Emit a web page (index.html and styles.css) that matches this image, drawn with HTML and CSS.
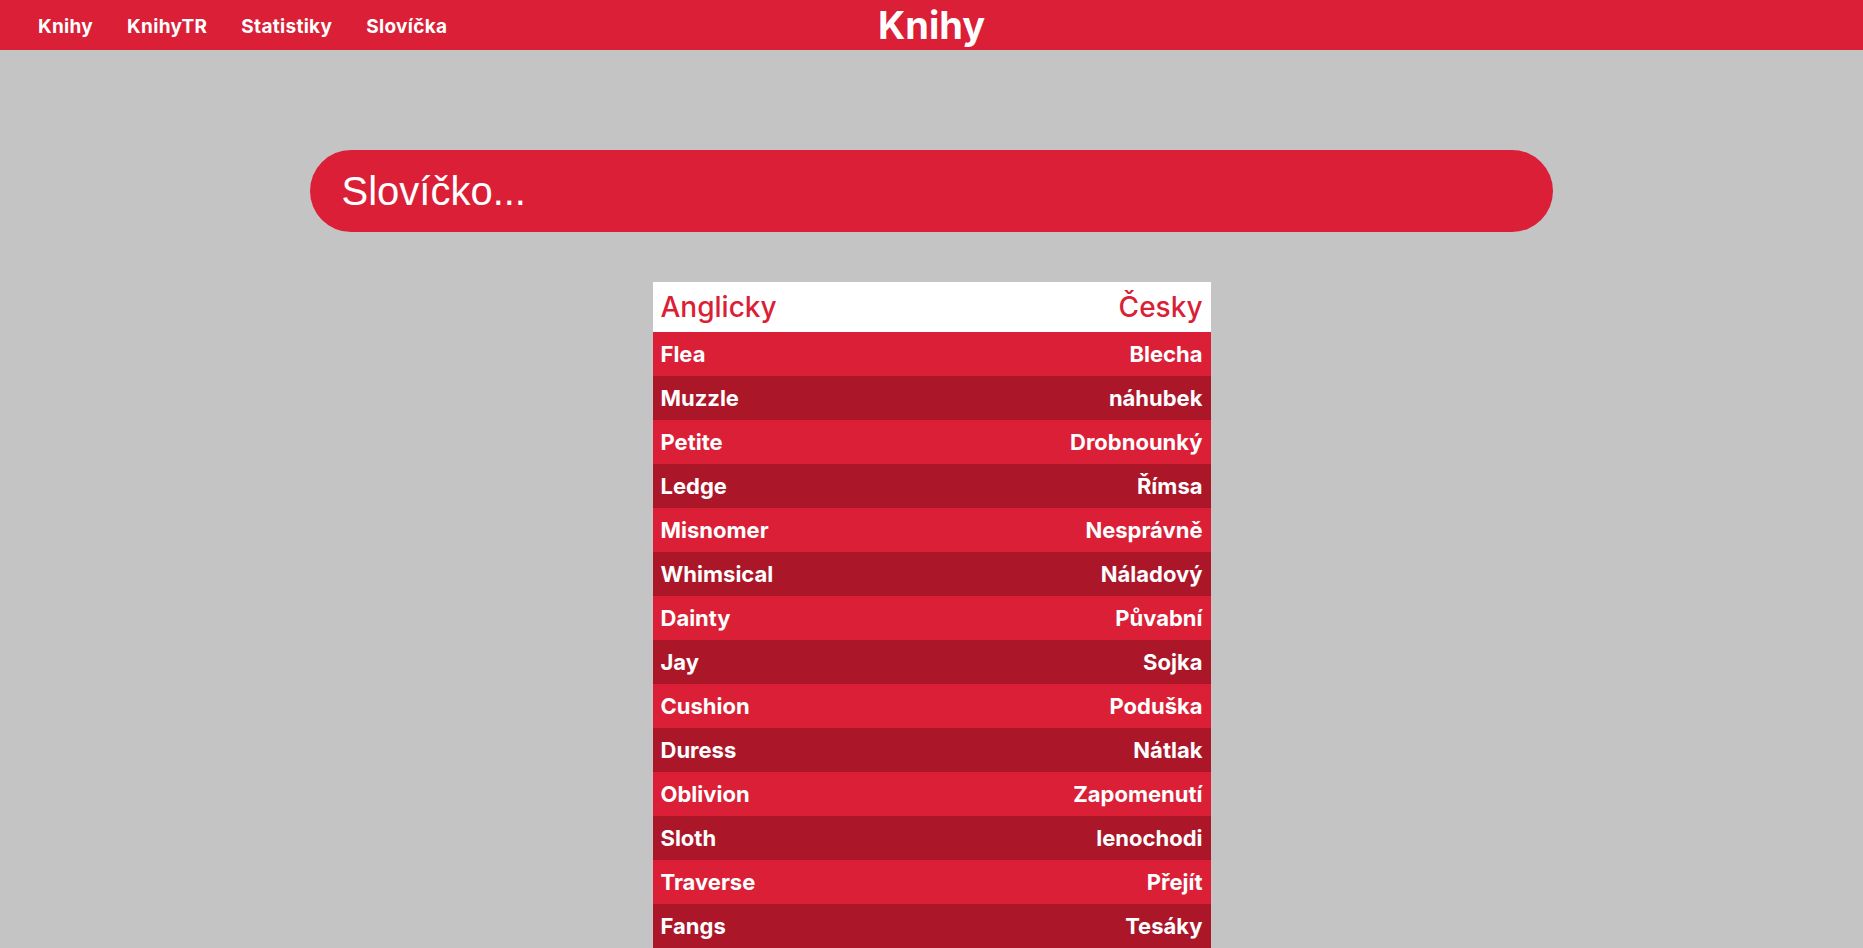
FILE: index.html
```html
<!DOCTYPE html>
<html lang="cs">
<head>
<meta charset="utf-8">
<title>Knihy</title>
<link rel="stylesheet" href="styles.css">
</head>
<body>
<header class="topbar">
  <nav class="nav">
    <a class="nav-link" href="#">Knihy</a>
    <a class="nav-link" href="#">KnihyTR</a>
    <a class="nav-link" href="#">Statistiky</a>
    <a class="nav-link" href="#">Slovíčka</a>
  </nav>
  <h1 class="title">Knihy</h1>
  <div class="spacer"></div>
</header>
<main class="main">
  <input class="search" type="text" placeholder="Slovíčko...">
  <table class="words">
    <thead>
      <tr><th class="en">Anglicky</th><th class="cz">Česky</th></tr>
    </thead>
    <tbody>
      <tr><td class="en">Flea</td><td class="cz">Blecha</td></tr>
      <tr><td class="en">Muzzle</td><td class="cz">náhubek</td></tr>
      <tr><td class="en">Petite</td><td class="cz">Drobnounký</td></tr>
      <tr><td class="en">Ledge</td><td class="cz">Římsa</td></tr>
      <tr><td class="en">Misnomer</td><td class="cz">Nesprávně</td></tr>
      <tr><td class="en">Whimsical</td><td class="cz">Náladový</td></tr>
      <tr><td class="en">Dainty</td><td class="cz">Půvabní</td></tr>
      <tr><td class="en">Jay</td><td class="cz">Sojka</td></tr>
      <tr><td class="en">Cushion</td><td class="cz">Poduška</td></tr>
      <tr><td class="en">Duress</td><td class="cz">Nátlak</td></tr>
      <tr><td class="en">Oblivion</td><td class="cz">Zapomenutí</td></tr>
      <tr><td class="en">Sloth</td><td class="cz">lenochodi</td></tr>
      <tr><td class="en">Traverse</td><td class="cz">Přejít</td></tr>
      <tr><td class="en">Fangs</td><td class="cz">Tesáky</td></tr>
    </tbody>
  </table>
</main>
</body>
</html>
```

FILE: styles.css
```css
* { box-sizing: border-box; }

html, body {
  margin: 0;
  padding: 0;
}

body {
  background: #c4c4c4;
  font-family: Inter, "Noto Sans", sans-serif;
  color: #fff;
}

.topbar {
  height: 50px;
  background: #da1f37;
  display: grid;
  grid-template-columns: 1fr auto 1fr;
  align-items: center;
}

.nav {
  display: flex;
  align-items: center;
  padding-left: 21px;
  height: 50px;
}

.nav-link {
  color: #fff;
  text-decoration: none;
  font-size: 19px;
  font-weight: 700;
  letter-spacing: 0.3px;
  padding: 2px 17px 0;
}

.title {
  margin: 0;
  font-size: 38px;
  font-weight: 700;
  line-height: 50px;
  color: #fff;
}

.main {
  display: flex;
  flex-direction: column;
  align-items: center;
  padding-top: 100px;
}

.search {
  width: 66.67%;
  height: 82px;
  border: none;
  outline: none;
  border-radius: 41px;
  background: #da1f37;
  color: #fff;
  font-family: "Liberation Sans", Arial, sans-serif;
  font-size: 40px;
  padding: 0 31px;
  margin: 0 0 50px;
}

.search::placeholder {
  color: #fff;
  opacity: 1;
}

.words {
  width: 558px;
  border-collapse: collapse;
}

.words th {
  background: #fff;
  color: #da1f37;
  font-size: 28px;
  font-weight: 500;
  height: 50px;
  padding: 0 8px;
}

.words td {
  font-size: 22px;
  font-weight: 700;
  height: 44px;
  padding: 0 8px;
}

.words .en { text-align: left; }
.words .cz { text-align: right; }

.words tbody tr:nth-child(odd) { background: #da1f37; }
.words tbody tr:nth-child(even) { background: #ab1629; }
```
